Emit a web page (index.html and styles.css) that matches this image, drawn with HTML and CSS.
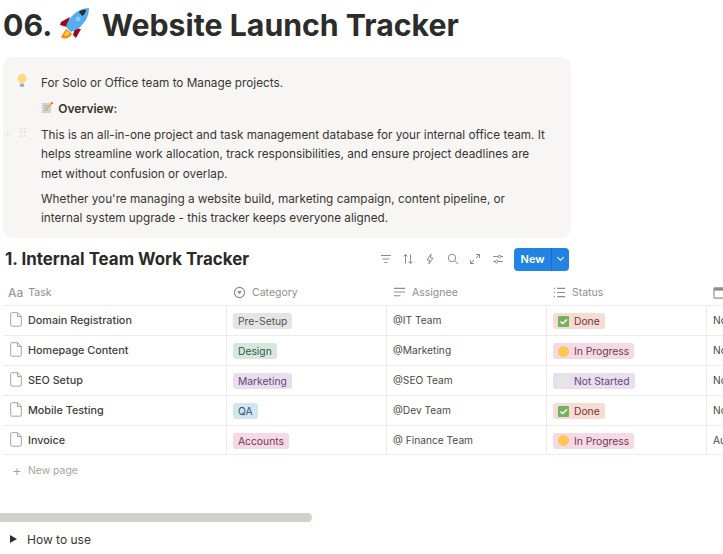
FILE: index.html
```html
<!DOCTYPE html>
<html lang="en">
<head>
<meta charset="utf-8">
<title>Website Launch Tracker</title>
<link rel="stylesheet" href="styles.css">
</head>
<body>
<main class="page">
  <h1 class="title">06. <svg class="rocket" viewBox="0 0 32 32" aria-hidden="true">
      <path d="M8 22 3 30c1 1 2 1.500 3 1.500 4 0 7-2 8-5z" fill="#f4900c"/>
      <path d="M8 24 6 29c3 0 5-1 6-3z" fill="#ffcc4d"/>
      <path d="M12 10 3 15l-1 3 7 2z" fill="#a0041e"/>
      <path d="M17 21 15 28l3 3 5-9z" fill="#a0041e"/>
      <path d="M31 1C24 1 16 5 11 13c-2 3-3 6-3 7l5 5c2-1 5-2 8-4 7-6 10-13 10-20z" fill="#55acee"/>
      <path d="M25 3c-2 0-4 1-4 3 1 0 2 1 3 3 2-1 4-4 4-6-1 0-2-1-3 0z" fill="#292f33"/>
      <circle cx="20" cy="12" r="2.500" fill="#88c9f9"/>
    </svg> Website Launch Tracker</h1>

  <section class="callout">
    <span class="handle-plus" aria-hidden="true">+</span>
    <span class="handle-dots" aria-hidden="true">⠿</span>
    <svg class="bulb" viewBox="0 0 14 18" aria-hidden="true">
      <path d="M7 1a5.500 5.500 0 0 0-3 10c.700.600 1 1.300 1 2h4c0-.700.300-1.400 1-2A5.500 5.500 0 0 0 7 1z" fill="#ffd983"/>
      <rect x="4.500" y="13" width="5" height="3.500" rx="1" fill="#99aab5"/>
    </svg>
    <div class="callout-body">
      <p class="line">For Solo or Office team to Manage projects.</p>
      <p class="overview"><svg class="memo" viewBox="0 0 14 14" aria-hidden="true">
          <rect x="1" y="2" width="10" height="11" fill="#ccd6dd"/>
          <path d="M3 5h6M3 7.500h4M3 10h5" stroke="#99aab5" stroke-width=".8"/>
          <path d="M11.500 1 13 2.500 6.500 9.500l-2 .7.700-2z" fill="#ffac33"/>
          <path d="M11.500 1 13 2.500l-.8.800-1.500-1.500z" fill="#dd2e44"/>
        </svg> <strong>Overview:</strong></p>
      <p class="para">This is an all-in-one project and task management database for your internal office team. It helps streamline work allocation, track responsibilities, and ensure project deadlines are met without confusion or overlap.</p>
      <p class="para">Whether you're managing a website build, marketing campaign, content pipeline, or internal system upgrade - this tracker keeps everyone aligned.</p>
    </div>
  </section>

  <div class="db-head">
    <h2 class="db-title">1. Internal Team Work Tracker</h2>
    <div class="toolbar">
      <svg class="tool" viewBox="0 0 12 12" aria-hidden="true"><path d="M1 2.500h10M2.500 6h7M4.500 9.500h3"/></svg>
      <svg class="tool" viewBox="0 0 12 12" aria-hidden="true"><path d="M3.500 10.500v-9M1.500 3.500l2-2 2 2M8.500 1.500v9M6.500 8.500l2 2 2-2"/></svg>
      <svg class="tool" viewBox="0 0 12 12" aria-hidden="true"><path d="M7 1 3 7h2.500L5 11l4-6H6.500z"/></svg>
      <svg class="tool" viewBox="0 0 12 12" aria-hidden="true"><circle cx="5" cy="5" r="3.700"/><path d="m8 8 3 3"/></svg>
      <svg class="tool" viewBox="0 0 12 12" aria-hidden="true"><path d="M7 1.500h3.500V5M10.500 1.500l-3.500 3.500M5 10.500H1.500V7M1.500 10.500 5 7"/></svg>
      <svg class="tool" viewBox="0 0 12 12" aria-hidden="true"><path d="M1 3.500h10M1 8.500h10"/><circle cx="7.500" cy="3.500" r="1.300" fill="#fff"/><circle cx="4.500" cy="8.500" r="1.300" fill="#fff"/></svg>
      <div class="new-btn">
        <span class="new-label">New</span>
        <span class="new-arrow"><svg viewBox="0 0 10 6" aria-hidden="true"><path d="m1.500 1 3.500 3.500L8.500 1"/></svg></span>
      </div>
    </div>
  </div>

  <div class="table">
    <div class="row head">
      <div class="cell"><span class="aa">Aa</span>Task</div>
      <div class="cell"><svg class="hicon" viewBox="0 0 14 14" aria-hidden="true"><circle cx="7" cy="7" r="5.500"/><path class="solid" d="M4.500 5.500h5L7 9z"/></svg>Category</div>
      <div class="cell"><svg class="hicon" viewBox="0 0 14 14" aria-hidden="true"><path d="M1 2.500h12M1 6.500h12M1 10.500h7"/></svg>Assignee</div>
      <div class="cell"><svg class="hicon" viewBox="0 0 14 14" aria-hidden="true"><path d="M4.500 2.500H13M4.500 7H13M4.500 11.500H13M1 2.500h1.200M1 7h1.200M1 11.500h1.200"/></svg>Status</div>
      <div class="cell"><svg class="hicon" viewBox="0 0 14 14" aria-hidden="true"><rect x="1" y="2" width="12" height="11" rx="1"/><path class="solid" d="M1 2h12v3H1z"/></svg></div>
    </div>

    <div class="row">
      <div class="cell name"><svg class="page-icon" viewBox="0 0 12 15" aria-hidden="true"><path d="M1.500.700h6l3.800 3.800v8.300a1.400 1.400 0 0 1-1.400 1.400H1.900A1.400 1.400 0 0 1 .700 12.800V1.500zM7.500.700v3.800h3.800"/></svg>Domain Registration</div>
      <div class="cell"><span class="tag grey">Pre-Setup</span></div>
      <div class="cell">@IT Team</div>
      <div class="cell"><span class="tag red"><span class="check">✓</span>Done</span></div>
      <div class="cell">No</div>
    </div>
    <div class="row">
      <div class="cell name"><svg class="page-icon" viewBox="0 0 12 15" aria-hidden="true"><path d="M1.500.700h6l3.800 3.800v8.300a1.400 1.400 0 0 1-1.400 1.400H1.900A1.400 1.400 0 0 1 .700 12.800V1.500zM7.500.700v3.800h3.800"/></svg>Homepage Content</div>
      <div class="cell"><span class="tag green">Design</span></div>
      <div class="cell">@Marketing</div>
      <div class="cell"><span class="tag pink"><span class="dot"></span>In Progress</span></div>
      <div class="cell">No</div>
    </div>
    <div class="row">
      <div class="cell name"><svg class="page-icon" viewBox="0 0 12 15" aria-hidden="true"><path d="M1.500.700h6l3.800 3.800v8.300a1.400 1.400 0 0 1-1.400 1.400H1.900A1.400 1.400 0 0 1 .700 12.800V1.500zM7.500.700v3.800h3.800"/></svg>SEO Setup</div>
      <div class="cell"><span class="tag purple">Marketing</span></div>
      <div class="cell">@SEO Team</div>
      <div class="cell"><span class="tag purple"><span class="blank"></span>Not Started</span></div>
      <div class="cell">No</div>
    </div>
    <div class="row">
      <div class="cell name"><svg class="page-icon" viewBox="0 0 12 15" aria-hidden="true"><path d="M1.500.700h6l3.800 3.800v8.300a1.400 1.400 0 0 1-1.400 1.400H1.900A1.400 1.400 0 0 1 .700 12.800V1.500zM7.500.700v3.800h3.800"/></svg>Mobile Testing</div>
      <div class="cell"><span class="tag blue">QA</span></div>
      <div class="cell">@Dev Team</div>
      <div class="cell"><span class="tag red"><span class="check">✓</span>Done</span></div>
      <div class="cell">No</div>
    </div>
    <div class="row">
      <div class="cell name"><svg class="page-icon" viewBox="0 0 12 15" aria-hidden="true"><path d="M1.500.700h6l3.800 3.800v8.300a1.400 1.400 0 0 1-1.400 1.400H1.900A1.400 1.400 0 0 1 .700 12.800V1.500zM7.500.700v3.800h3.800"/></svg>Invoice</div>
      <div class="cell"><span class="tag pink">Accounts</span></div>
      <div class="cell">@ Finance Team</div>
      <div class="cell"><span class="tag pink"><span class="dot"></span>In Progress</span></div>
      <div class="cell">Au</div>
    </div>
  </div>

  <div class="new-page"><span class="plus">+</span>New page</div>
  <div class="scrollbar"></div>
  <div class="toggle"><span class="tri"></span>How to use</div>
</main>
</body>
</html>
```
FILE: styles.css
```css
* { box-sizing: border-box; }
html, body { margin: 0; height: 100%; overflow: hidden; background: #fff; }
body { font-family: Inter, "Noto Sans", sans-serif; color: #37352f; }
p, h1, h2 { margin: 0; }
.page { width: 723px; height: 554px; overflow: hidden; display: flex; flex-direction: column; }

.title { height: 57px; padding: 6px 0 0 3px; font-size: 30.25px; line-height: 38px; font-weight: 700; color: #2c2c2b; white-space: nowrap; }
.rocket { width: 32px; height: 32px; vertical-align: -3px; margin: 0 4px 0 0; }

.callout { position: relative; flex: none; width: 568px; height: 181px; margin-left: 3px; background: #f8f6f4; border-radius: 10px; padding: 16px 24px 0 38px; font-size: 11.75px; color: #37352f; }
.bulb { position: absolute; left: 13px; top: 16px; width: 12px; height: 15px; }
.handle-plus { position: absolute; left: 0; top: 67px; font-size: 14px; line-height: 18px; color: #eceae7; }
.handle-dots { position: absolute; left: 15px; top: 67px; font-size: 13px; line-height: 18px; color: #e6e4e0; }
.callout-body { display: flex; flex-direction: column; }
.line { line-height: 20px; margin-bottom: 6px; }
.overview { line-height: 20px; margin-bottom: 6.5px; }
.overview strong { font-weight: 600; font-size: 12px; }
.memo { width: 13px; height: 13px; vertical-align: -1px; margin-right: 1px; }
.para { line-height: 19.5px; margin-bottom: 5.5px; }

.db-head { flex: none; display: flex; align-items: center; justify-content: space-between; width: 569px; height: 41px; padding: 1px 0 0 5px; }
.db-title { font-size: 16.9px; line-height: 24px; font-weight: 700; color: #2b2a27; }
.toolbar { display: flex; align-items: center; }
.tool { width: 12px; height: 12px; margin-right: 10.400px; fill: none; stroke: #8f8d88; stroke-width: 1; }
.new-btn { display: flex; height: 23px; background: #2383e2; color: #fff; border-radius: 4px; font-size: 11px; font-weight: 600; line-height: 23px; }
.new-label { width: 37px; text-align: center; }
.new-arrow { width: 18px; display: flex; align-items: center; justify-content: center; border-left: 1px solid #1a6fc4; }
.new-arrow svg { width: 9px; height: 6px; fill: none; stroke: #fff; stroke-width: 1.200; }

.table { flex: none; margin-left: 3px; width: 740px; font-size: 10.2px; color: #4a4945; }
.row { display: grid; grid-template-columns: 224px 160px 160px 160px 36px; height: 30px; border-bottom: 1px solid #edecea; }
.row:last-child { height: 29px; }
.row.head { height: 27px; color: #8f8d88; font-size: 10.5px; }
.row.head .cell { border-right: 0; padding-bottom: 0; }
.cell { display: flex; align-items: center; padding: 0 0 1px 6px; border-right: 1px solid #edecea; white-space: nowrap; overflow: hidden; }
.row .cell:first-child { padding-left: 7px; }
.row.head .cell:first-child { padding-left: 7px; }
.name { font-size: 10.8px; font-weight: 500; color: #3e3d39; padding-bottom: 0; }
.aa { font-size: 12px; font-weight: 500; color: #9b9a97; margin-right: 5px; margin-left: -2px; }
.hicon { flex: none; width: 13px; height: 13px; margin: 0 6px 0 0; fill: none; stroke: #8f8d88; stroke-width: 1.200; }
.hicon .solid { fill: #8f8d88; stroke: none; }
.page-icon { flex: none; width: 12px; height: 15px; margin: -2px 6px 0 0; fill: none; stroke: #9b9a97; stroke-width: .9; }

.tag { display: inline-flex; align-items: center; height: 16px; margin-top: 2px; padding: 0 5px; border-radius: 3px; font-size: 10.3px; line-height: 16px; }
.grey { background: #e6e5e3; color: #55534e; }
.green { background: #d8e7de; color: #2f5b44; }
.purple { background: #e8deee; color: #5f4a75; }
.blue { background: #d3e5ef; color: #2a5673; }
.pink { background: #f5dae5; color: #6d3a52; }
.red { background: #f7dcd6; color: #6e3630; }
.check { flex: none; width: 11px; height: 11px; margin-right: 5px; background: #74b25a; color: #fff; border-radius: 1px; font-size: 10px; line-height: 11px; text-align: center; font-weight: 700; }
.dot { flex: none; width: 11px; height: 11px; margin-right: 5px; border-radius: 50%; background: #fcc850; }
.blank { flex: none; width: 11px; height: 11px; margin-right: 5px; border-radius: 1px; background: #e7e6e6; }

.new-page { flex: none; display: flex; align-items: center; height: 30px; margin-left: 12px; font-size: 10.4px; color: #a5a4a0; }
.plus { font-size: 15px; font-weight: 300; width: 16px; }
.scrollbar { flex: none; width: 312px; height: 9px; margin-top: 28px; background: #d1d0ca; border-radius: 0 5px 5px 0; }
.toggle { flex: none; display: flex; align-items: center; height: 20px; margin-top: 7px; padding-left: 10px; font-size: 12px; color: #37352f; }
.tri { width: 0; height: 0; margin-right: 10px; border-left: 7px solid #2f2e2a; border-top: 4px solid transparent; border-bottom: 4px solid transparent; }
```
